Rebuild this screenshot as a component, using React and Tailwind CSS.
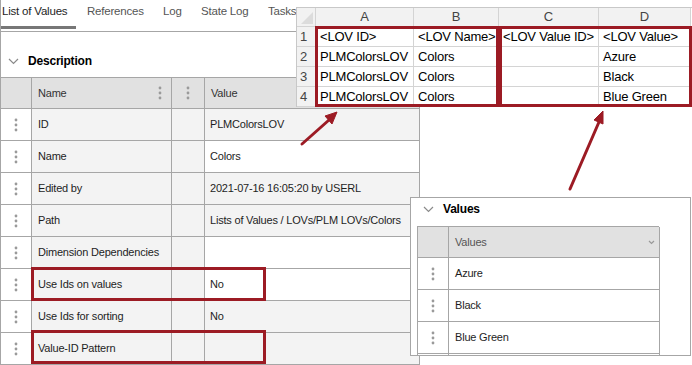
import React from 'react'

const ui = { fontFamily: '"Liberation Sans", Arial, sans-serif' }
const xl = { fontFamily: '"Liberation Sans", Arial, sans-serif' }

function Dots({ className = '' }) {
  return (
    <svg width="4" height="14" viewBox="0 0 4 14" className={className}>
      <circle cx="2" cy="2" r="1.4" fill="#9a9a9a" />
      <circle cx="2" cy="7" r="1.4" fill="#9a9a9a" />
      <circle cx="2" cy="12" r="1.4" fill="#9a9a9a" />
    </svg>
  )
}

function Chevron() {
  return (
    <svg width="11" height="7" viewBox="0 0 11 7">
      <polyline points="1,1 5.5,5.5 10,1" fill="none" stroke="#8a8a8a" strokeWidth="1.2" />
    </svg>
  )
}

const rows = [
  { name: 'ID', value: 'PLMColorsLOV', grey: true },
  { name: 'Name', value: 'Colors', grey: false },
  { name: 'Edited by', value: '2021-07-16 16:05:20 by USERL', grey: true },
  { name: 'Path', value: 'Lists of Values / LOVs/PLM LOVs/Colors', grey: true },
  { name: 'Dimension Dependencies', value: '', grey: false },
  { name: 'Use Ids on values', value: 'No', grey: false },
  { name: 'Use Ids for sorting', value: 'No', grey: true },
  { name: 'Value-ID Pattern', value: '', grey: true },
]

const sheet = [
  ['<LOV ID>', '<LOV Name>', '<LOV Value ID>', '<LOV Value>'],
  ['PLMColorsLOV', 'Colors', '', 'Azure'],
  ['PLMColorsLOV', 'Colors', '', 'Black'],
  ['PLMColorsLOV', 'Colors', '', 'Blue Green'],
]

function MainPanel() {
  return (
    <div className="w-[424px] h-full border-l border-[#a6a6a6] text-[11px] tracking-[-0.2px] text-[#1e1e1e]" style={ui}>
      <div className="h-[32px] flex border-b border-[#a6a6a6] text-[11.5px]">
        <div className="w-[86px] flex flex-col justify-between">
          <span className="pl-[1px] pt-[4px] leading-[14px] text-[#1e1e1e]">List of Values</span>
          <div className="w-[75px] h-[3px] bg-[#777] mb-[2px]" />
        </div>
        <div className="w-[76px] pt-[4px] leading-[14px] text-[#555]">References</div>
        <div className="w-[38px] pt-[4px] leading-[14px] text-[#555]">Log</div>
        <div className="w-[67px] pt-[4px] leading-[14px] text-[#555]">State Log</div>
        <div className="pt-[4px] leading-[14px] text-[#555]">Tasks</div>
      </div>

      <div className="h-[45px] pt-[13px] pl-[7px] flex items-center gap-[9px]">
        <Chevron />
        <span className="font-bold text-[12px] text-black">Description</span>
      </div>

      <div className="w-[420px] grid grid-cols-[31px_140px_33px_215px] border-t border-[#a6a6a6]">
        <div className="h-[31px] bg-[#e1e1e1] border-r border-b border-[#a6a6a6]" />
        <div className="h-[31px] bg-[#e1e1e1] border-r border-b border-[#a6a6a6] flex items-center justify-between pl-[6px] pr-[9px] text-[#333]">
          <span>Name</span>
          <Dots />
        </div>
        <div className="h-[31px] bg-[#e1e1e1] border-r border-b border-[#a6a6a6] flex items-center justify-center">
          <Dots />
        </div>
        <div className="h-[31px] bg-[#e1e1e1] border-r border-b border-[#a6a6a6] flex items-center pl-[6px] text-[#333]">Value</div>

        {rows.map((r) => (
          <React.Fragment key={r.name}>
            <div className="h-[32px] bg-white border-r border-b border-[#a6a6a6] flex items-center justify-center">
              <Dots />
            </div>
            <div className="h-[32px] bg-[#f3f3f3] border-r border-b border-[#a6a6a6] flex items-center pl-[6px]">{r.name}</div>
            <div className="h-[32px] bg-[#f3f3f3] border-r border-b border-[#a6a6a6]" />
            <div className={`h-[32px] border-r border-b border-[#a6a6a6] flex items-center pl-[5px] ${r.grey ? 'bg-[#f3f3f3]' : 'bg-white'}`}>
              {r.value}
            </div>
          </React.Fragment>
        ))}
      </div>
    </div>
  )
}

function Spreadsheet() {
  const cols = ['A', 'B', 'C', 'D']
  return (
    <div className="absolute left-[296px] top-[7px] w-[396px] bg-white border-t border-l border-[#c8c8c8] text-[13px] text-black" style={xl}>
      <div className="grid grid-cols-[19px_98px_85px_100px_92px]">
        <div className="h-[19px] bg-[#f2f2f2] border-r border-b border-[#d4d4d4] relative overflow-hidden">
          <svg width="19" height="19" viewBox="0 0 19 19" className="block">
            <polygon points="16,4 16,16 4,16" fill="#dcdcdc" />
          </svg>
        </div>
        {cols.map((c) => (
          <div key={c} className="h-[19px] bg-[#f2f2f2] border-r border-b border-[#d4d4d4] flex items-center justify-center text-[#444]">
            {c}
          </div>
        ))}
        {sheet.map((row, i) => (
          <React.Fragment key={i}>
            <div className="h-[20px] bg-[#f2f2f2] border-r border-b border-[#d4d4d4] flex items-center pl-[3px] text-[#444]">{i + 1}</div>
            {row.map((cell, j) => (
              <div key={j} className="h-[20px] border-r border-b border-[#d4d4d4] flex items-center pl-[4px] whitespace-nowrap overflow-hidden tracking-[-0.2px]">
                {cell}
              </div>
            ))}
          </React.Fragment>
        ))}
      </div>
      <div className="absolute left-[18px] top-[18px] w-[184px] h-[81px] border-[3px] border-[#9c1b24]" />
      <div className="absolute left-[202px] top-[18px] w-[193px] h-[81px] border-[3px] border-[#9c1b24]" />
    </div>
  )
}

function ValuesPanel() {
  const vals = ['Azure', 'Black', 'Blue Green', '']
  return (
    <div className="absolute left-[410px] top-[197px] w-[281px] h-[159px] bg-white border border-[#a6a6a6] overflow-hidden text-[11px] tracking-[-0.2px] text-[#1e1e1e]" style={ui}>
      <div className="h-[22px] pl-[12px] flex items-center gap-[9px]">
        <Chevron />
        <span className="font-bold text-[12px] text-black">Values</span>
      </div>
      <div className="ml-[6px] mt-[6px] w-[242px] grid grid-cols-[31px_211px] border-t border-l border-[#a6a6a6]">
        <div className="h-[31px] bg-[#e1e1e1] border-r border-b border-[#a6a6a6]" />
        <div className="h-[31px] bg-[#e1e1e1] border-r border-b border-[#a6a6a6] flex items-center justify-between pl-[6px] pr-[4px] text-[#555]">
          <span>Values</span>
          <svg width="7" height="5" viewBox="0 0 7 5">
            <polyline points="1,1 3.5,3.5 6,1" fill="none" stroke="#999" strokeWidth="1.2" />
          </svg>
        </div>
        {vals.map((v, i) => (
          <React.Fragment key={i}>
            <div className="h-[32px] border-r border-b border-[#a6a6a6] flex items-center justify-center">
              <Dots />
            </div>
            <div className="h-[32px] border-r border-b border-[#a6a6a6] flex items-center pl-[6px]">{v}</div>
          </React.Fragment>
        ))}
      </div>
    </div>
  )
}

function Arrows() {
  return (
    <svg width="692" height="365" viewBox="0 0 692 365" className="absolute left-0 top-0 pointer-events-none">
      <line x1="302" y1="144" x2="329" y2="120" stroke="#9c1b24" strokeWidth="3" strokeLinecap="round" />
      <polygon points="337,112 332,124 325,116" fill="#9c1b24" stroke="#9c1b24" strokeWidth="1" strokeLinejoin="round" />
      <line x1="570" y1="189" x2="599" y2="122" stroke="#9c1b24" strokeWidth="3" strokeLinecap="round" />
      <polygon points="603,111 603,124 594,120" fill="#9c1b24" stroke="#9c1b24" strokeWidth="1" strokeLinejoin="round" />
    </svg>
  )
}

export default function App() {
  return (
    <div className="relative w-[692px] h-[365px] bg-white overflow-hidden">
      <MainPanel />
      <div className="absolute left-[31px] top-[267px] w-[235px] h-[34px] border-[3px] border-[#9c1b24]" />
      <div className="absolute left-[31px] top-[330px] w-[235px] h-[34px] border-[3px] border-[#9c1b24]" />
      <Spreadsheet />
      <ValuesPanel />
      <Arrows />
    </div>
  )
}
